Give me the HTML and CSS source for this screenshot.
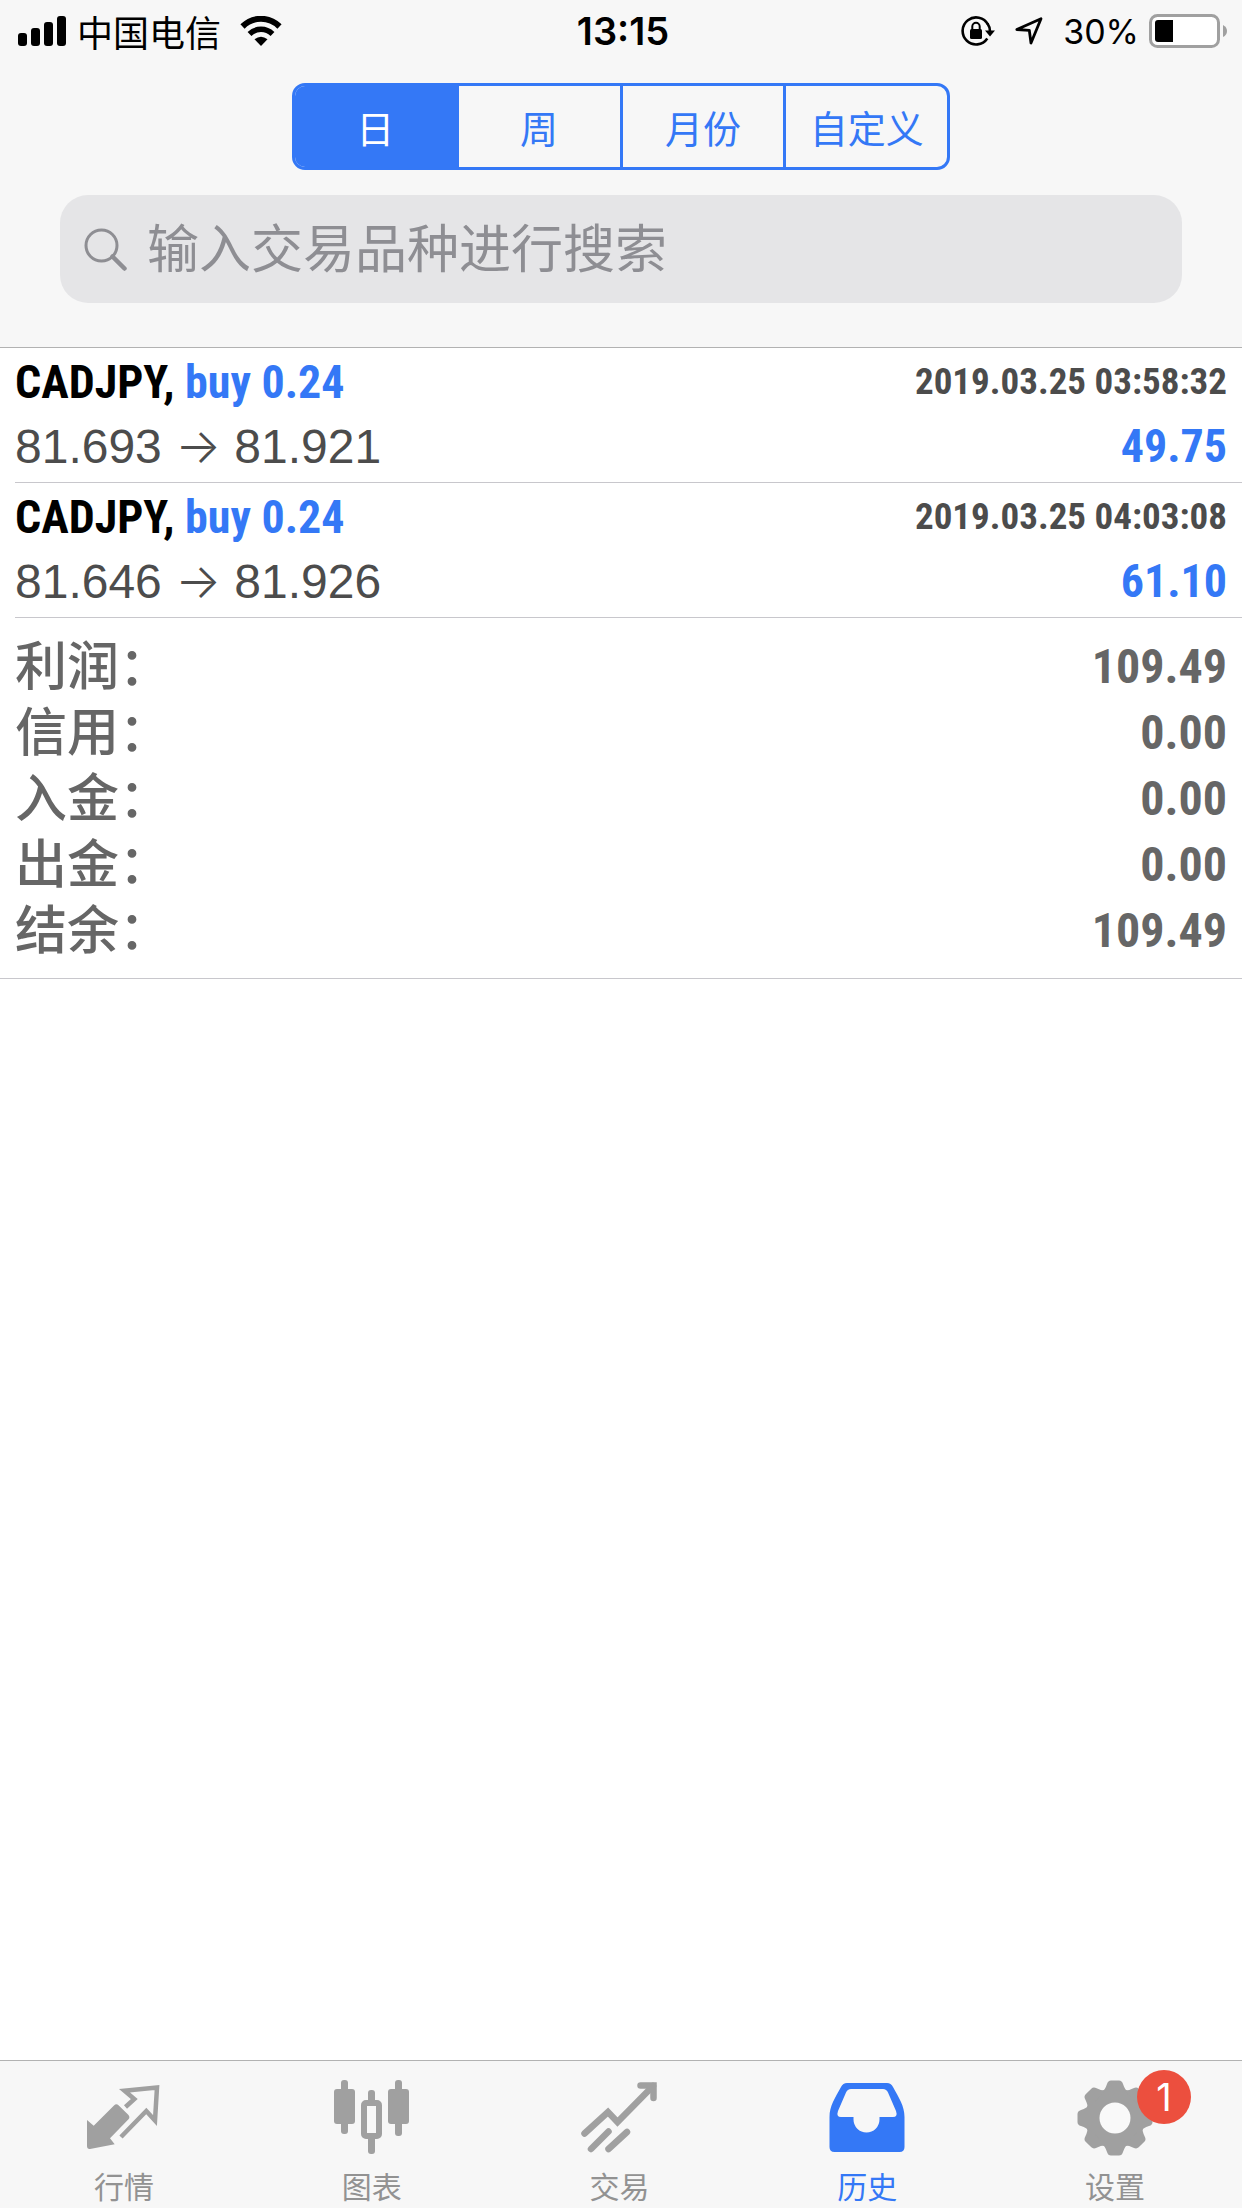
FILE: index.html
```html
<!DOCTYPE html>
<html lang="zh-Hans">
<head>
  <meta charset="UTF-8">
  <meta name="viewport" content="width=device-width, initial-scale=1.0">
  <title>历史</title>
  <link rel="stylesheet" href="styles.css">
</head>
<body>
  <header class="header">
    <div class="status">
      <div class="status-left">
        <svg class="signal" viewBox="0 0 48 30" width="48" height="30">
          <rect x="0" y="17" width="9" height="13" rx="3"/>
          <rect x="13" y="12" width="9" height="18" rx="3"/>
          <rect x="26" y="6" width="9" height="24" rx="3"/>
          <rect x="39" y="0" width="9" height="30" rx="3"/>
        </svg>
        <span>中国电信</span>
        <svg class="wifi" viewBox="0 0 42 30" width="42" height="30">
          <path d="M2.500 10.500C13 .2 29 .2 39.500 10.500" fill="none" stroke="#000" stroke-width="6"/>
          <path d="M9.500 18C16 11.700 26 11.700 32.500 18" fill="none" stroke="#000" stroke-width="5.500"/>
          <path d="M14.500 23.300Q21 18 27.500 23.300L21 30z"/>
        </svg>
      </div>
      <time class="clock">13:15</time>
      <div class="status-right">
        <svg class="lock" viewBox="0 0 34 30" width="34" height="30">
          <path d="M27 8.500A13.500 13.500 0 1 0 26.300 22.500" fill="none" stroke="#000" stroke-width="2.600"/>
          <path d="M24 14.500h10l-5 6z"/>
          <path d="M26.500 7.500q2.500 3.500 2.500 8" fill="none" stroke="#000" stroke-width="2.600"/>
          <rect x="9" y="13" width="12" height="10" rx="1.500"/>
          <path d="M11.300 14v-3.500a3.700 3.700 0 0 1 7.400 0V14" fill="none" stroke="#000" stroke-width="2"/>
        </svg>
        <svg class="location" viewBox="0 0 28 28" width="28" height="28">
          <path d="M1.800 12.500L26 1.800L16 26L14.300 13.300z" fill="none" stroke="#000" stroke-width="2.800" stroke-linejoin="round"/>
        </svg>
        <span class="percent">30%</span>
        <svg class="battery" viewBox="0 0 79 34" width="79" height="34">
          <rect x="1.500" y="1.500" width="68" height="31" rx="7" fill="#fff" stroke="#a0a0a0" stroke-width="3"/>
          <path d="M9 6h15v22H9q-3 0-3-3V9q0-3 3-3z"/>
          <path d="M74 11q4 2 4 6t-4 6z" fill="#a0a0a0"/>
        </svg>
      </div>
    </div>

    <div class="segments">
      <button class="segment active" type="button">日</button>
      <button class="segment" type="button">周</button>
      <button class="segment" type="button">月份</button>
      <button class="segment" type="button">自定义</button>
    </div>

    <label class="search">
      <svg viewBox="0 0 44 44" width="44" height="44">
        <ellipse cx="17.500" cy="18.500" rx="15.500" ry="15.500" fill="none" stroke="#8e8e93" stroke-width="3"/>
        <path d="M28.500 29.500L40.500 41.500" stroke="#8e8e93" stroke-width="4.500" stroke-linecap="round"/>
      </svg>
      <input type="search" placeholder="输入交易品种进行搜索" aria-label="搜索">
    </label>
  </header>

  <main class="content">
    <ul class="deals">
      <li class="deal">
        <div class="line">
          <span class="symbol">CADJPY, <span class="buy">buy 0.24</span></span>
          <time class="date">2019.03.25 03:58:32</time>
        </div>
        <div class="line">
          <span class="price">81.693 <span class="arrow">→</span> 81.921</span>
          <span class="profit">49.75</span>
        </div>
      </li>
      <li class="deal">
        <div class="line">
          <span class="symbol">CADJPY, <span class="buy">buy 0.24</span></span>
          <time class="date">2019.03.25 04:03:08</time>
        </div>
        <div class="line">
          <span class="price">81.646 <span class="arrow">→</span> 81.926</span>
          <span class="profit">61.10</span>
        </div>
      </li>
    </ul>

    <dl class="summary">
      <div class="total"><dt>利润：</dt><dd>109.49</dd></div>
      <div class="total"><dt>信用：</dt><dd>0.00</dd></div>
      <div class="total"><dt>入金：</dt><dd>0.00</dd></div>
      <div class="total"><dt>出金：</dt><dd>0.00</dd></div>
      <div class="total"><dt>结余：</dt><dd>109.49</dd></div>
    </dl>
  </main>

  <nav class="tabs">
    <a class="tab" href="#quotes">
      <span class="icon">
        <svg viewBox="0 0 76 76">
          <path d="M1 40L7.700 45.700L28 25.500Q30.300 23.300 32.500 25.300L42 34.500Q44.500 37 42.500 39.300L24 58.300L28.700 64.300L4 69Q1 69.300 1 66z" fill="currentColor"/>
          <path d="M39.500 27L48.300 19L38.500 10.700L71 7.500L69 40.500L60.300 31L35 57" fill="none" stroke="currentColor" stroke-width="4.500"/>
        </svg>
      </span>
      <span class="name">行情</span>
    </a>
    <a class="tab" href="#chart">
      <span class="icon">
        <svg viewBox="0 0 76 76" fill="currentColor">
          <rect x="7" y="0" width="7" height="54" rx="3"/>
          <rect x="0" y="9" width="21" height="35" rx="3"/>
          <rect x="61" y="0" width="7" height="56" rx="3"/>
          <rect x="54" y="9" width="21" height="35" rx="3"/>
          <rect x="34" y="10" width="7" height="15" rx="3"/>
          <rect x="34" y="55" width="7" height="19" rx="3"/>
          <rect x="30" y="23" width="15" height="33" rx="2" fill="none" stroke="currentColor" stroke-width="6"/>
        </svg>
      </span>
      <span class="name">图表</span>
    </a>
    <a class="tab" href="#trade">
      <span class="icon">
        <svg viewBox="0 0 76 76" fill="none" stroke="currentColor" stroke-width="6.500" stroke-linecap="round">
          <path d="M3.500 53.500L27 32L36.500 42L72 6"/>
          <path d="M59.500 5.500H72.500V18"/>
          <path d="M10 69L27.500 51.500M27.500 69L46 52"/>
        </svg>
      </span>
      <span class="name">交易</span>
    </a>
    <a class="tab current" href="#history">
      <span class="icon">
        <svg viewBox="0 0 76 76">
          <path fill="currentColor" fill-rule="evenodd" d="M18 3H58Q62 3 64 7C70 18 75.500 26 75.500 37V67Q75.500 72 70.500 72H5.500Q.5 72 .5 67V37C.5 26 6 18 12 7Q14 3 18 3zM22 9Q18.500 9 17 12.500L9 31Q7 37 12 37H24.500V39.500A13 13 0 0 0 50.500 39.500V37H64Q69 37 67 31L59 12.500Q57.500 9 54 9z"/>
        </svg>
      </span>
      <span class="name">历史</span>
    </a>
    <a class="tab" href="#settings">
      <span class="icon">
        <svg viewBox="-38 -38 76 76" fill="currentColor">
          <defs><path id="tooth" d="M-13-26Q-10-28-8-34Q-7-37.500-4-37.500H4Q7-37.500 8-34Q10-28 13-26z"/></defs>
          <circle r="30"/>
          <use href="#tooth"/>
          <use href="#tooth" transform="rotate(45)"/>
          <use href="#tooth" transform="rotate(90)"/>
          <use href="#tooth" transform="rotate(135)"/>
          <use href="#tooth" transform="rotate(180)"/>
          <use href="#tooth" transform="rotate(225)"/>
          <use href="#tooth" transform="rotate(270)"/>
          <use href="#tooth" transform="rotate(315)"/>
          <circle r="15.500" fill="#f9f9f9"/>
        </svg>
        <span class="badge">1</span>
      </span>
      <span class="name">设置</span>
    </a>
  </nav>
</body>
</html>
```
FILE: styles.css
```css
* {
  box-sizing: border-box;
}
body {
  margin: 0;
  min-height: 100vh;
  display: flex;
  flex-direction: column;
  background-color: #fff;
  font-family: Inter, "Noto Sans CJK SC", sans-serif;
}

/* top */
.header {
  background-color: #f7f7f7;
  border-bottom: 1px solid #b2b2b2;
  padding-bottom: 44px;
}
.status {
  display: grid;
  grid-template-columns: 1fr auto 1fr;
  align-items: center;
  height: 62px;
  padding: 0 14px 0 18px;
  font-size: 36px;
  color: #000;
}
.status-left,
.status-right {
  display: flex;
  align-items: center;
}
.status-left {
  gap: 11px;
}
.status-right {
  justify-content: flex-end;
}
.wifi {
  margin-left: 8px;
}
.location {
  margin: 0 20px;
}
.battery {
  margin-left: 10px;
}
.clock {
  font-size: 38px;
  font-weight: 600;
}
.percent {
  font-size: 34px;
}

.segments {
  display: flex;
  width: 53%;
  height: 87px;
  margin: 21px auto 25px;
  border: 3px solid #3478f6;
  border-radius: 13px;
  overflow: hidden;
}
.segment {
  flex: 1;
  padding: 0;
  border: none;
  border-left: 3px solid #3478f6;
  background: none;
  color: #3478f6;
  font-family: inherit;
  font-size: 38px;
  cursor: pointer;
}
.segment:first-child {
  border-left: none;
}
.segment.active {
  background-color: #3478f6;
  color: #fff;
}

.search {
  display: flex;
  align-items: center;
  gap: 19px;
  height: 108px;
  margin: 0 60px;
  padding: 0 24px;
  border-radius: 28px;
  background-color: #e5e5e7;
}
.search input {
  flex: 1;
  min-width: 0;
  padding: 0;
  border: none;
  outline: none;
  background: none;
  font-family: inherit;
  font-size: 52px;
}
.search input::placeholder {
  color: #8e8e93;
}

/* deals */
.content {
  flex: 1;
}
.deals {
  margin: 0;
  padding: 0 0 0 15px;
  list-style: none;
}
.deal {
  padding: 2px 15px 4px 0;
  border-bottom: 1px solid #c8c7cc;
}
.line {
  display: flex;
  justify-content: space-between;
  height: 64px;
  line-height: 64px;
}
.symbol,
.date,
.profit,
.total dd {
  font-family: "Roboto Condensed", "Liberation Sans", sans-serif;
  font-weight: bold;
}
.symbol,
.profit {
  font-size: 46px;
}
.symbol {
  color: #000;
}
.buy,
.profit {
  color: #3478f6;
}
.date {
  font-size: 37px;
  color: #4c4c4c;
}
.price {
  font-family: "Liberation Sans", sans-serif;
  font-size: 48px;
  color: #4c4c4c;
}
.arrow {
  font-family: Inter, sans-serif;
  font-weight: 300;
}

/* totals */
.summary {
  margin: 0;
  padding: 16px 15px 14px;
  border-bottom: 1px solid #c8c7cc;
  color: #666;
}
.total {
  display: flex;
  justify-content: space-between;
  line-height: 66px;
}
.total dt {
  font-size: 52px;
  font-weight: 500;
}
.total dd {
  margin: 0;
  font-size: 48px;
}

/* bottom tabs */
.tabs {
  position: sticky;
  bottom: 0;
  display: flex;
  height: 148px;
  padding-right: 3px;
  border-top: 1px solid #b2b2b2;
  background-color: #f7f7f7;
}
.tab {
  flex: 1;
  display: flex;
  flex-direction: column;
  align-items: center;
  padding-top: 19px;
  color: #a0a0a0;
  text-decoration: none;
}
.tab.current {
  color: #3478f6;
}
.icon {
  position: relative;
  width: 76px;
  height: 76px;
}
.icon svg {
  display: block;
}
.name {
  margin-top: 11px;
  font-size: 30px;
  line-height: 40px;
}
.tab:not(.current) .name {
  color: #929292;
}
.badge {
  position: absolute;
  top: -10px;
  right: -38px;
  width: 54px;
  height: 54px;
  border-radius: 50%;
  background-color: #ec4f3e;
  color: #fff;
  font-size: 38px;
  line-height: 54px;
  text-align: center;
}
```
